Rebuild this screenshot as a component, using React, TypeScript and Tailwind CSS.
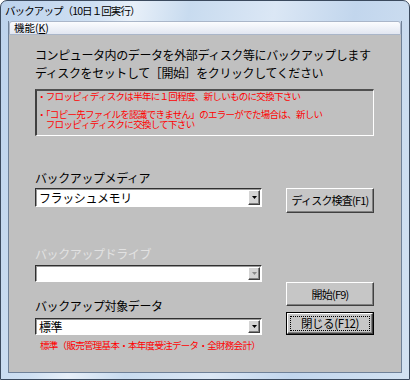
import React from "react";

const jp = "font-['Noto_Sans_CJK_JP',sans-serif]";

function Arrow({ disabled }: { disabled?: boolean }) {
  return (
    <div className="w-[12px] h-full flex items-center justify-center bg-[#d4d4d4] border border-t-white border-l-white border-r-[#404040] border-b-[#404040] shadow-[inset_-1px_-1px_0_#808080]">
      <svg width="5" height="3" viewBox="0 0 5 3">
        <polygon points="0,0 5,0 2.5,3" fill={disabled ? "#8a8a8a" : "#000"} />
      </svg>
    </div>
  );
}

function Combo({ value, h, disabled }: { value?: string; h: string; disabled?: boolean }) {
  return (
    <div className={`w-[227px] ${h} flex bg-white border-t border-l border-t-[#303030] border-l-[#303030] border-r border-b border-r-white border-b-white shadow-[inset_1px_1px_0_#9a9a9a]`}>
      <div className="flex-1 flex items-center pl-[3px] text-[12px] tracking-[-0.4px] leading-none text-black whitespace-nowrap">{value}</div>
      <div className="py-[1px] pr-[1px] h-full">
        <Arrow disabled={disabled} />
      </div>
    </div>
  );
}

function Btn({ label, h, def }: { label: string; h: string; def?: boolean }) {
  if (def) {
    return (
      <div className={`w-[88px] ${h} border border-black flex`}>
        <div className="flex-1 flex p-[2px] bg-[#c6c6c6] border border-t-white border-l-white border-r-[#404040] border-b-[#404040] shadow-[inset_-1px_-1px_0_#808080]">
          <div className="flex-1 flex items-center justify-center border border-dotted border-black text-[11.5px] tracking-[-0.4px] leading-none text-black whitespace-nowrap">{label}</div>
        </div>
      </div>
    );
  }
  return (
    <div className={`w-[88px] ${h} flex items-center justify-center bg-[#c6c6c6] border border-t-white border-l-white border-r-[#404040] border-b-[#404040] shadow-[inset_-1px_-1px_0_#808080] text-[11px] tracking-[-0.8px] leading-none text-black whitespace-nowrap`}>
      {label}
    </div>
  );
}

export default function App() {
  return (
    <div className={`${jp} w-[410px] h-[380px] flex flex-col rounded-t-[7px] border border-[#3b4a5e] bg-[linear-gradient(100deg,#bcd2ec_0%,#cfe0f2_20%,#e8f0f9_28%,#c8dbef_40%,#dbe7f5_58%,#c2d6ed_75%,#d3e2f2_100%)]`}>
      <div className="h-[20px] flex items-center pl-[4px] text-[10.5px] tracking-[-0.9px] text-black leading-none whitespace-nowrap">
        バックアップ（10日１回実行）
      </div>
      <div className="flex-1 mx-[7px] mb-[6px] flex flex-col border-x border-b border-[#6f8198]">
        <div className="h-[14px] flex items-center pl-[4px] text-[10.5px] leading-none text-black bg-[linear-gradient(#fbfcfe,#e2e7f2)] border border-[#aab6c9] rounded-t-[3px]">
          機能(<span className="underline">K</span>)
        </div>
        <div className="flex-1 bg-[#c0c0c0] pl-[26px] pt-[11px] flex flex-col">
          <div className="text-[12px] tracking-[-0.4px] leading-[18px] text-black whitespace-nowrap">
            <div>コンピュータ内のデータを外部ディスク等にバックアップします</div>
            <div>ディスクをセットして［開始］をクリックしてください</div>
          </div>
          <div className="mt-[7px] w-[339px] h-[47px] border-t-2 border-l-2 border-t-[#505050] border-l-[#404040] border-r border-b border-r-white border-b-white text-[9.5px] tracking-[-0.7px] leading-[10px] text-[#ff0000] whitespace-pre">
            <div>・フロッピィディスクは半年に１回程度、新しいものに交換下さい</div>
            <div className="mt-[8px]">
              ・「コピー先ファイルを認識できません」のエラーがでた場合は、新しい
              <br />
              {"　フロッピィディスクに交換して下さい"}
            </div>
          </div>
          <div className="flex gap-[24px]">
            <div className="w-[227px] flex flex-col">
              <div className="mt-[35px] text-[12px] tracking-[-0.4px] leading-[14px] text-black whitespace-nowrap">バックアップメディア</div>
              <div className="mt-[3px]">
                <Combo value="フラッシュメモリ" h="h-[19px]" />
              </div>
              <div className="mt-[40px] text-[12px] tracking-[-0.4px] leading-[14px] text-[#e2e2e2] whitespace-nowrap">バックアップドライブ</div>
              <div className="mt-[4px]">
                <Combo h="h-[17px]" disabled />
              </div>
              <div className="mt-[17px] text-[12px] tracking-[-0.4px] leading-[14px] text-black whitespace-nowrap">バックアップ対象データ</div>
              <div className="mt-[5px]">
                <Combo value="標準" h="h-[17px]" />
              </div>
              <div className="mt-[3px] pl-[5px] text-[9.5px] tracking-[-0.7px] leading-[14px] text-[#ff0000] whitespace-nowrap">
                標準（販売管理基本・本年度受注データ・全財務会計）
              </div>
            </div>
            <div className="w-[88px] flex flex-col">
              <div className="mt-[52px]">
                <Btn label="ディスク検査(F1)" h="h-[25px]" />
              </div>
              <div className="mt-[69px]">
                <Btn label="開始(F9)" h="h-[24px]" />
              </div>
              <div className="mt-[6px]">
                <Btn label="閉じる(F12)" h="h-[23px]" def />
              </div>
            </div>
          </div>
        </div>
      </div>
    </div>
  );
}
